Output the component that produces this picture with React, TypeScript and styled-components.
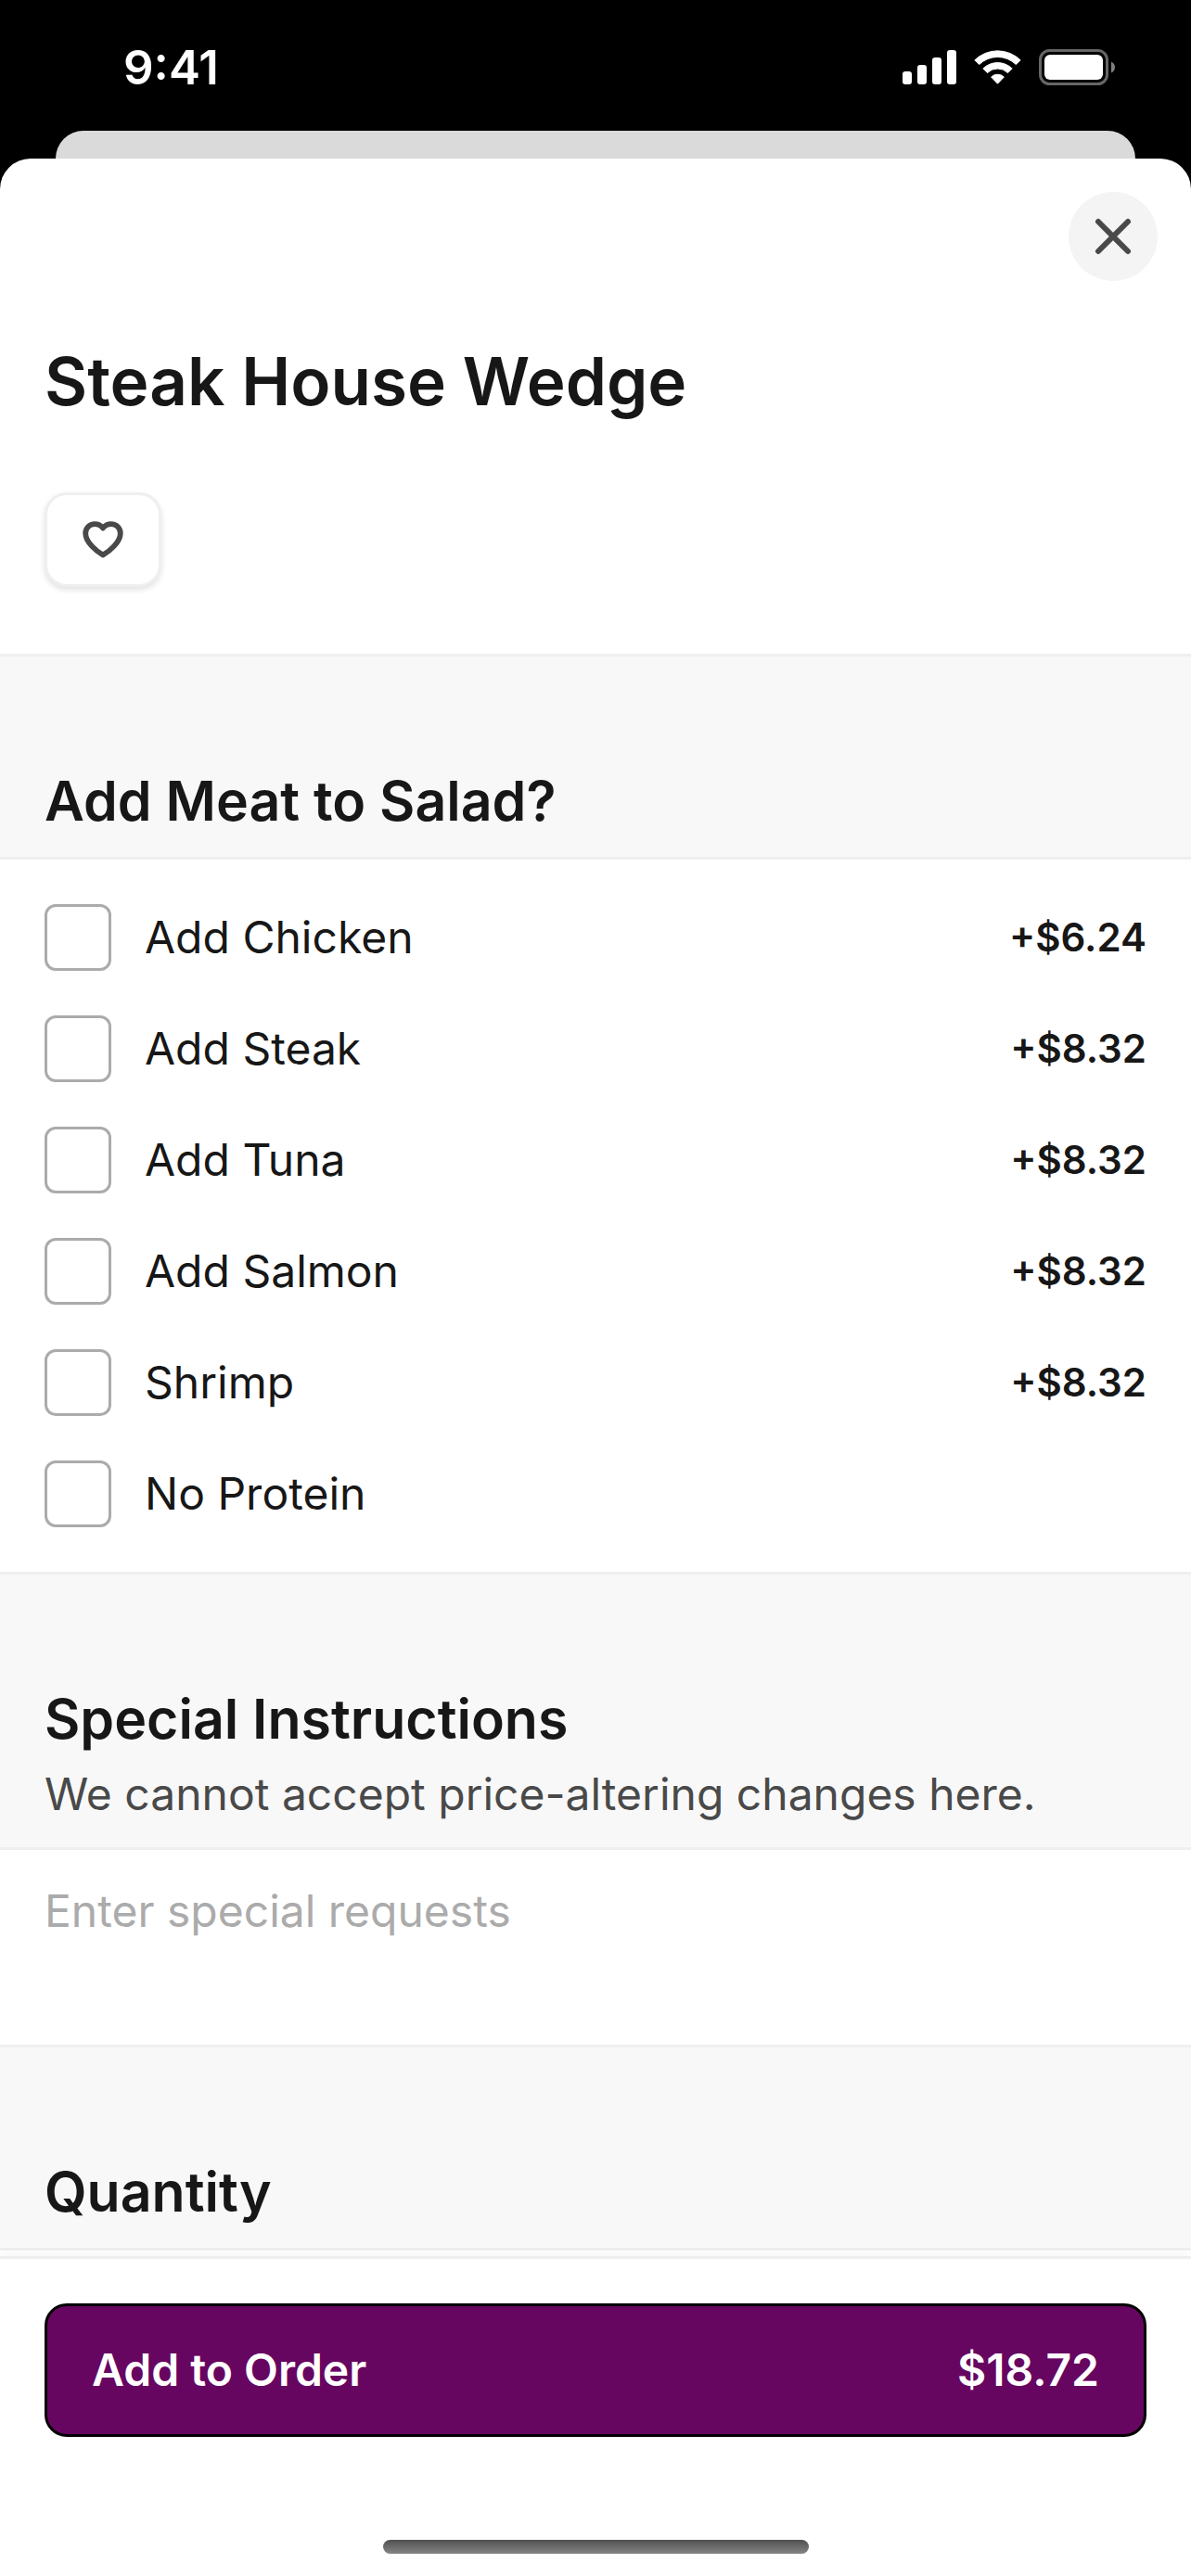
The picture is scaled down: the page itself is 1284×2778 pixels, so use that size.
import React, { useState } from "react";
import styled, { createGlobalStyle } from "styled-components";

const color = {
  ink: "#171717",
  inkSoft: "#494949",
  placeholder: "#ababab",
  line: "#efefef",
  band: "#f8f8f8",
  backCard: "#dadada",
  brand: "#670661",
};

const GlobalStyle = createGlobalStyle`
  *, *::before, *::after { box-sizing: border-box; }
  html, body { margin: 0; padding: 0; background: #000; }
  body, button, input, textarea { font-family: Inter, "Liberation Sans", sans-serif; }
`;

const Screen = styled.div`
  display: flex;
  flex-direction: column;
  min-height: 100vh;
  background: #000;
  color: ${color.ink};
`;

const StatusBar = styled.div`
  display: flex;
  align-items: center;
  justify-content: space-between;
  height: 141px;
  padding: 5px 81px 0 133px;
  color: #fff;
`;

const Clock = styled.time`
  font-size: 51px;
  line-height: 60px;
  font-weight: 600;
`;

const BackCard = styled.div`
  height: 30px;
  margin: 0 60px;
  border-radius: 30px 30px 0 0;
  background: ${color.backCard};
`;

const Sheet = styled.main`
  display: flex;
  flex: 1;
  flex-direction: column;
  border-radius: 33px 33px 0 0;
  background: #fff;
`;

const Intro = styled.header`
  display: flex;
  flex-direction: column;
  align-items: flex-start;
  padding: 36px 48px 72px;
`;

const CloseButton = styled.button`
  display: grid;
  place-items: center;
  align-self: flex-end;
  width: 96px;
  height: 96px;
  margin-right: -12px;
  padding: 0;
  border: 0;
  border-radius: 50%;
  background: #f4f4f4;
  color: ${color.inkSoft};
`;

const Title = styled.h1`
  margin: 66px 0 78px;
  font-size: 71px;
  line-height: 84px;
  font-weight: 600;
`;

const FavoriteButton = styled.button`
  display: grid;
  place-items: center;
  width: 126px;
  height: 102px;
  padding: 0;
  border: 3px solid ${color.line};
  border-radius: 24px;
  background: #fff;
  box-shadow: 0 3px 6px rgba(0, 0, 0, 0.12);
  color: ${color.inkSoft};
`;

const SectionHead = styled.div`
  display: flex;
  flex-direction: column;
  gap: 12px;
  padding: 120px 48px 24px;
  border: solid ${color.line};
  border-width: 3px 0;
  background: ${color.band};
`;

const SectionTitle = styled.h2`
  margin: 0;
  font-size: 59px;
  line-height: 72px;
  font-weight: 600;
`;

const SectionNote = styled.p`
  margin: 0;
  color: ${color.inkSoft};
  font-size: 48px;
  line-height: 66px;
`;

const OptionList = styled.ul`
  display: flex;
  flex-direction: column;
  gap: 48px;
  margin: 0;
  padding: 48px;
  list-style: none;
`;

const OptionRow = styled.label`
  display: flex;
  align-items: center;
  gap: 36px;
  font-size: 48px;
  line-height: 72px;
`;

const CheckBox = styled.input`
  flex: none;
  appearance: none;
  width: 72px;
  height: 72px;
  margin: 0;
  border: 3px solid ${color.placeholder};
  border-radius: 12px;
  background: #fff;

  &:checked {
    border-color: ${color.brand};
    background: ${color.brand};
  }
`;

const OptionPrice = styled.span`
  margin-left: auto;
  font-size: 42px;
  font-weight: 600;
`;

const Requests = styled.textarea`
  display: block;
  width: 100%;
  padding: 33px 48px 45px;
  border: 0;
  outline: 0;
  resize: none;
  background: transparent;
  color: ${color.ink};
  font-size: 48px;
  line-height: 66px;

  &::placeholder {
    color: ${color.placeholder};
    opacity: 1;
  }
`;

const Footer = styled.footer`
  position: sticky;
  bottom: 0;
  display: flex;
  flex-direction: column;
  align-items: center;
  margin-top: auto;
  padding: 48px 48px 24px;
  border-top: 3px solid ${color.line};
  background: #fff;
  box-shadow: 0 0 12px rgba(0, 0, 0, 0.06);
`;

const OrderButton = styled.button`
  display: flex;
  align-items: center;
  justify-content: space-between;
  width: 100%;
  height: 144px;
  padding: 0 48px;
  border: 3px solid #000;
  border-radius: 24px;
  background: ${color.brand};
  color: #fff;
  font-size: 48px;
  line-height: 72px;
  font-weight: 600;
`;

const HomeIndicator = styled.div`
  width: 459px;
  height: 15px;
  margin-top: 111px;
  border-radius: 8px;
  background: linear-gradient(#505050, #858585);
`;

const StatusIcons = () => (
  <svg width="230" height="40" viewBox="0 0 230 40" fill="#fff" aria-hidden="true">
    <rect x="0" y="24" width="10" height="14" rx="3" />
    <rect x="16" y="17" width="10" height="21" rx="3" />
    <rect x="32" y="9" width="10" height="29" rx="3" />
    <rect x="48" y="1" width="10" height="37" rx="3" />
    <g stroke="#fff" strokeWidth="1" strokeLinejoin="round">
      <path d="M77.8 11.9A35.4 35.4 0 0 1 127.2 11.9L122.3 16.5A28.4 28.4 0 0 0 82.7 16.5Z" />
      <path d="M86.8 21A22.4 22.4 0 0 1 118.2 21L113.5 25.5A15.8 15.8 0 0 0 91.5 25.5Z" />
      <path d="M95.6 30A10 10 0 0 1 109.4 30L102.5 37.2Z" />
    </g>
    <rect x="148.5" y="1.5" width="72" height="36" rx="10" fill="none" stroke="#666" strokeWidth="3" />
    <rect x="153" y="6" width="63" height="27" rx="6" />
    <path d="M225 13.5Q229 15.5 229 19.5T225 25.5Z" fill="#808080" />
  </svg>
);

const CloseIcon = () => (
  <svg width="40" height="40" viewBox="0 0 40 40" fill="none" stroke="currentColor" strokeWidth="6" strokeLinecap="round" aria-hidden="true">
    <path d="M4 4L36 36M36 4L4 36" />
  </svg>
);

const HeartIcon = () => (
  <svg width="44" height="40" viewBox="0 0 44 40" fill="none" stroke="currentColor" strokeWidth="5.8" strokeLinejoin="round" aria-hidden="true">
    <path d="M22 7.5C19.5 4.5 16.5 3.2 13.2 3.2C7.500 3.2 3.2 7.500 3.2 13.200C3.200 22.500 15 32.500 22 36.500C29 32.500 40.800 22.500 40.800 13.200C40.800 7.500 36.500 3.200 30.800 3.200C27.500 3.200 24.500 4.500 22 7.500Z" />
  </svg>
);

const meats = [
  { name: "Add Chicken", price: "+$6.24" },
  { name: "Add Steak", price: "+$8.32" },
  { name: "Add Tuna", price: "+$8.32" },
  { name: "Add Salmon", price: "+$8.32" },
  { name: "Shrimp", price: "+$8.32" },
  { name: "No Protein", price: "" },
];

export default function App() {
  const [requests, setRequests] = useState("");

  return (
    <Screen>
      <GlobalStyle />
      <StatusBar>
        <Clock>9:41</Clock>
        <StatusIcons />
      </StatusBar>
      <BackCard />
      <Sheet>
        <Intro>
          <CloseButton type="button" aria-label="Close">
            <CloseIcon />
          </CloseButton>
          <Title>Steak House Wedge</Title>
          <FavoriteButton type="button" aria-label="Favorite">
            <HeartIcon />
          </FavoriteButton>
        </Intro>

        <SectionHead>
          <SectionTitle>Add Meat to Salad?</SectionTitle>
        </SectionHead>
        <OptionList>
          {meats.map((meat) => (
            <li key={meat.name}>
              <OptionRow>
                <CheckBox type="checkbox" />
                <span>{meat.name}</span>
                {meat.price && <OptionPrice>{meat.price}</OptionPrice>}
              </OptionRow>
            </li>
          ))}
        </OptionList>

        <SectionHead>
          <SectionTitle id="requests-title">Special Instructions</SectionTitle>
          <SectionNote>We cannot accept price-altering changes here.</SectionNote>
        </SectionHead>
        <Requests
          rows={2}
          aria-labelledby="requests-title"
          placeholder="Enter special requests"
          value={requests}
          onChange={(event) => setRequests(event.target.value)}
        />

        <SectionHead>
          <SectionTitle>Quantity</SectionTitle>
        </SectionHead>

        <Footer>
          <OrderButton type="button">
            <span>Add to Order</span>
            <span>$18.72</span>
          </OrderButton>
          <HomeIndicator />
        </Footer>
      </Sheet>
    </Screen>
  );
}
